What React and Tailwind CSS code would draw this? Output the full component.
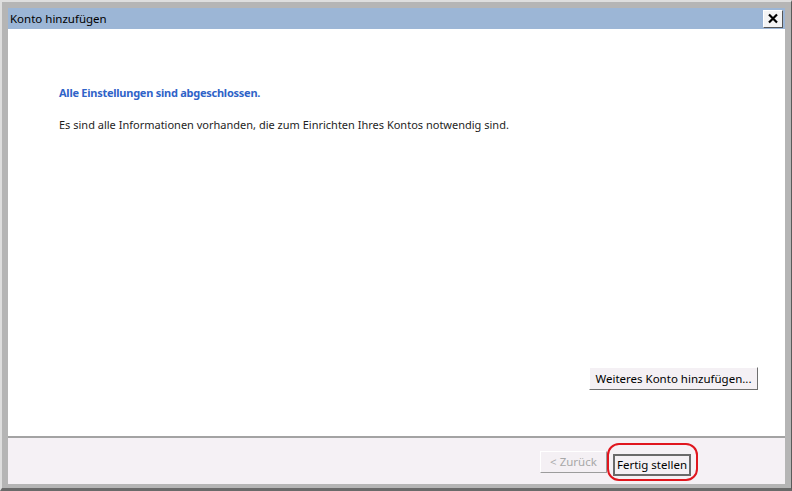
export default function App() {
  const font = { fontFamily: '"Noto Sans", "Open Sans", sans-serif' };
  return (
    <div className="w-[792px] h-[491px] bg-[#b5b5b5] border-t-2 border-l-2 border-t-[#dedede] border-l-[#dedede] border-r border-b-[3px] border-r-[#5a5a5a] border-b-[#6a6a6a] flex flex-col px-[6px] pt-[6px] pb-[4px]" style={font}>
      <div className="h-[21px] bg-[#9cb6d6] flex items-center justify-between pl-[2px] pr-[2px] shrink-0">
        <span className="text-[11.5px] text-black leading-none">Konto hinzufügen</span>
        <div className="w-[20px] h-[18px] bg-[#f4f4f4] border border-t-white border-l-white border-r-[#555] border-b-[#555] flex items-center justify-center">
          <svg width="12" height="11" viewBox="0 0 12 11">
            <path d="M2 1.5 L10 9.5 M10 1.5 L2 9.5" stroke="#000" strokeWidth="2.2" />
          </svg>
        </div>
      </div>
      <div className="flex-1 bg-white flex flex-col">
        <div className="flex-1 flex flex-col pl-[51px] pt-[58px] pr-[27px] pb-[46px]">
          <div className="text-[11px] font-bold text-[#2f63c8] leading-none tracking-[-0.25px]">Alle Einstellungen sind abgeschlossen.</div>
          <div className="text-[11px] text-[#1e1e1e] leading-none mt-[21px]">Es sind alle Informationen vorhanden, die zum Einrichten Ihres Kontos notwendig sind.</div>
          <div className="flex-1" />
          <div className="flex justify-end">
            <button className="h-[23px] w-[169px] bg-[#f4f0f4] border border-t-white border-l-white border-r-[#6e6e6e] border-b-[#6e6e6e] text-[11.5px] text-black leading-none">Weiteres Konto hinzufügen...</button>
          </div>
        </div>
        <div className="h-[48px] bg-[#f5f1f5] border-t-2 border-t-[#a3a3a3] flex items-start justify-end pr-[94px] pt-[13px] gap-[6px]">
          <button className="h-[22px] w-[67px] bg-[#f4f0f4] border border-t-white border-l-white border-r-[#9c9c9c] border-b-[#9c9c9c] text-[11.5px] text-[#a8a8a8] leading-none">&lt; Zurück</button>
          <div className="relative">
            <button className="h-[22px] w-[78px] bg-[#f4f0f4] border-2 border-[#6a6a6a] text-[11.5px] text-black leading-none">Fertig stellen</button>
            <div className="absolute left-[-6px] top-[-8px] w-[91px] h-[38px] border-2 border-[#e0161e] rounded-[12px] pointer-events-none" />
          </div>
        </div>
      </div>
    </div>
  );
}
